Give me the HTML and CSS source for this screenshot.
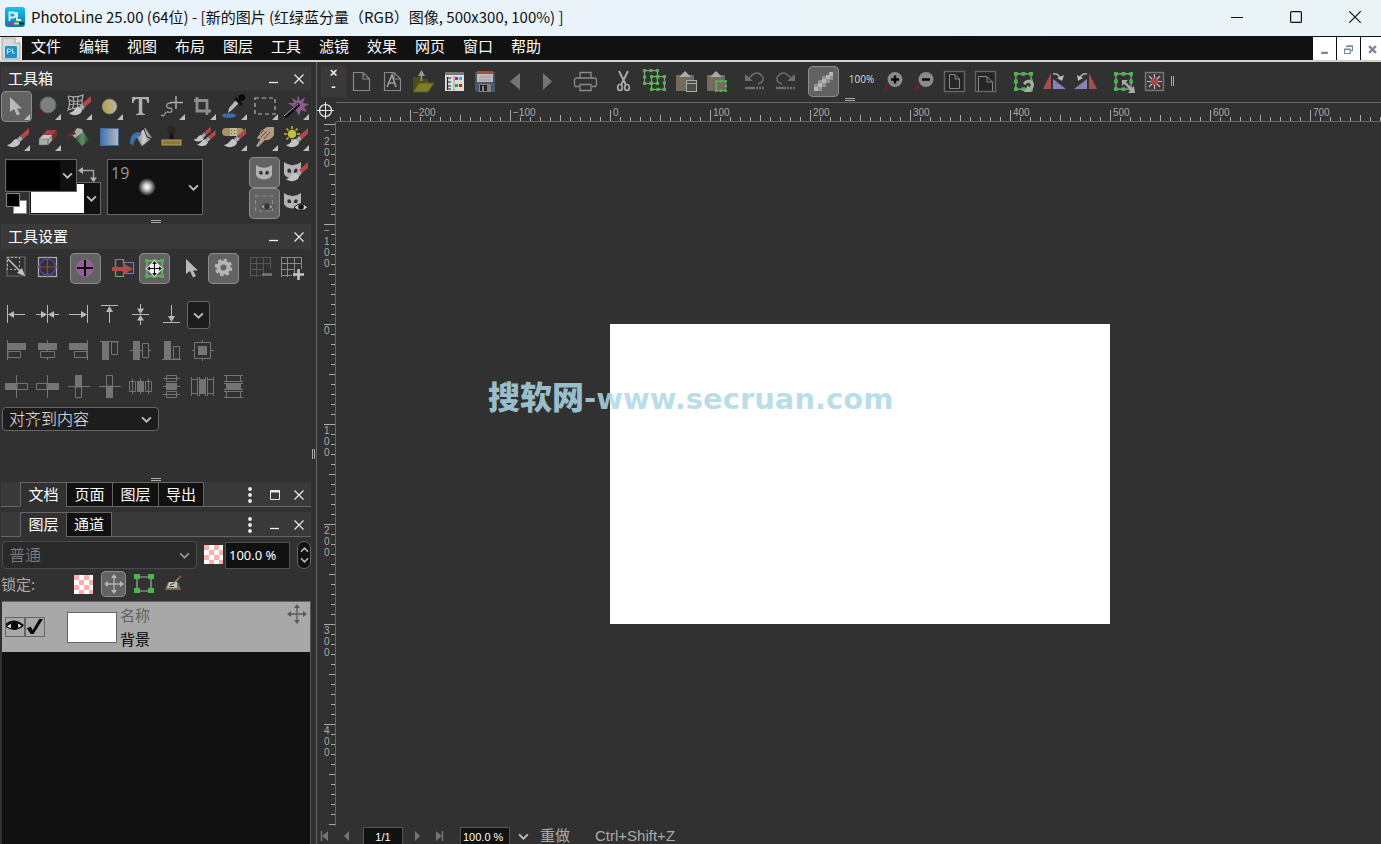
FILE: index.html
```html
<!DOCTYPE html>
<html lang="zh-CN">
<head>
<meta charset="utf-8">
<title>PhotoLine 25.00</title>
<link rel="stylesheet" href="styles.css">
</head>
<body>
<svg class="defs" aria-hidden="true">
  <defs>
    <linearGradient id="gBlue"><stop offset="0" stop-color="#3f6fb5"/><stop offset="1" stop-color="#b9b9b9"/></linearGradient>
    <linearGradient id="gGold"><stop offset="0" stop-color="#b7a049"/><stop offset="1" stop-color="#b9b4a2"/></linearGradient>
    <linearGradient id="gLogo" x2="0" y2="1"><stop offset="0" stop-color="#19c3e6"/><stop offset="1" stop-color="#0a76b5"/></linearGradient>
    <linearGradient id="gGreen"><stop offset="0" stop-color="#23422a"/><stop offset=".6" stop-color="#5f8f63"/><stop offset="1" stop-color="#28442d"/></linearGradient>
    <linearGradient id="gMetal"><stop offset="0" stop-color="#777"/><stop offset=".5" stop-color="#d0d0d0"/><stop offset="1" stop-color="#777"/></linearGradient>
    <radialGradient id="gSoft"><stop offset="0" stop-color="#fff"/><stop offset=".35" stop-color="#ccc"/><stop offset="1" stop-color="#111"/></radialGradient>
    <pattern id="check" width="10" height="10" patternUnits="userSpaceOnUse"><rect width="10" height="10" fill="#fff"/><rect width="5" height="5" fill="#ffadad"/><rect x="5" y="5" width="5" height="5" fill="#ffadad"/></pattern>
  </defs>
  <symbol id="more" viewBox="0 0 31 31"><path d="M23 29L29 23V29Z" fill="#bdbdbd"/></symbol>
  <symbol id="brush" viewBox="0 0 31 31"><path d="M28 6L19 14L22 17L28 12Z" fill="#b04a48"/><path d="M19 14L16 17L19 20L22 17Z" fill="#a9a9a9"/><path d="M16 17C12 16 12 22 6 23C10 27 19 25 19 20Z" fill="#c4c4c4"/></symbol>
  <symbol id="chev" viewBox="0 0 10 6"><path d="M1 1L5 5L9 1" fill="none" stroke="#bdbdbd" stroke-width="1.7"/></symbol>
  <symbol id="close" viewBox="0 0 10 10"><path d="M.5 .5L9.5 9.5M9.5 .5L.5 9.5" stroke="#e8e8e8" stroke-width="1.2"/></symbol>
  <symbol id="mini" viewBox="0 0 10 10"><path d="M0 8.500H9" stroke="#f0f0f0" stroke-width="1.3"/></symbol>
  <symbol id="maxi" viewBox="0 0 10 10"><path d="M.5 .5H9.500V9.500H.5Z" fill="none" stroke="#e8e8e8"/><path d="M0 1.500H10" stroke="#e8e8e8" stroke-width="2"/></symbol>
  <symbol id="dots" viewBox="0 0 4 16"><g fill="#eee"><circle cx="2" cy="2" r="1.900"/><circle cx="2" cy="8" r="1.900"/><circle cx="2" cy="14" r="1.900"/></g></symbol>
  <symbol id="mask" viewBox="0 0 18 16" preserveAspectRatio="none"><path d="M0 0Q4 3 9 3Q14 3 18 0V11Q16 15 9 15.500Q2 15 0 11Z" fill="#b3b3b3"/><path d="M3.500 7Q6 5 7.500 8V10H4ZM14.500 7Q12 5 10.500 8V10H14Z" fill="#333"/></symbol>
  <symbol id="move" viewBox="0 0 20 20"><path d="M10 3V17M3 10H17" stroke="currentColor" stroke-width="1.3"/><path d="M10 0L13 4H7ZM10 20L13 16H7ZM0 10L4 7V13ZM20 10L16 7V13Z" fill="currentColor"/></symbol>
  <symbol id="cursor" viewBox="0 0 12 19"><path d="M0 0V15L4 12L7 18.500L10 17L7 11.500H12Z" fill="#b8b8b8"/></symbol>
  <symbol id="handles" viewBox="0 0 20 20"><path d="M2 2H18V18H2Z" fill="none" stroke="#aaa" stroke-width="1.200"/><path d="M0 0h4v4h-4zM8 0h4v4h-4zM16 0h4v4h-4zM0 8h4v4h-4zM16 8h4v4h-4zM0 16h4v4h-4zM8 16h4v4h-4zM16 16h4v4h-4z" fill="#48b848"/></symbol>
</svg>

<header class="titlebar">
  <svg class="logo" viewBox="0 0 20 20"><rect width="20" height="20" rx="3" fill="url(#gLogo)"/><path d="M4.500 14V5.500H8Q10.500 5.500 10.500 8T8 10.500H5M12 5V13H16" fill="none" stroke="#d6f4fc" stroke-width="1.800"/><path d="M5 16.500H9" stroke="#c428a0" stroke-width="2"/><path d="M9 16.500H14" stroke="#dfe03a" stroke-width="2"/><path d="M14 16.500H19" stroke="#222" stroke-width="2"/></svg>
  <h1>PhotoLine 25.00 (64位) - [新的图片 (红绿蓝分量（RGB）图像, 500x300, 100%) ]</h1>
  <div class="winbtns">
    <button aria-label="最小化"><svg viewBox="0 0 12 12"><path d="M0 6.500H12" stroke="#111"/></svg></button>
    <button aria-label="最大化"><svg viewBox="0 0 12 12"><rect x=".6" y=".6" width="10.800" height="10.800" rx="1" fill="none" stroke="#111" stroke-width="1.200"/></svg></button>
    <button aria-label="关闭"><svg viewBox="0 0 12 12"><path d="M.3 .3L11.700 11.700M11.700 .3L.3 11.700" stroke="#111" stroke-width="1.200"/></svg></button>
  </div>
</header>

<nav class="menubar">
  <svg class="doc" viewBox="0 0 22 23"><rect width="22" height="23" fill="#eee"/><path d="M2 1H15L20 6V22H2Z" fill="#d9d9d9" stroke="#999" stroke-width=".8"/><path d="M15 1V6H20" fill="#fff" stroke="#888" stroke-width=".8"/><rect x="5" y="9" width="12" height="12" rx="1" fill="#1a93c8"/><path d="M7.500 17V12H9Q11 12 11 13.500T8 15M12.500 11.500V16H15" fill="none" stroke="#bfe6f5"/></svg>
  <button>文件</button><button>编辑</button><button>视图</button><button>布局</button><button>图层</button><button>工具</button><button>滤镜</button><button>效果</button><button>网页</button><button>窗口</button><button>帮助</button>
  <div class="mdi">
    <button aria-label="最小化文档"><svg viewBox="0 0 8 8"><path d="M1 7H7" stroke="#778899" stroke-width="2"/></svg></button>
    <button aria-label="还原文档"><svg viewBox="0 0 8 8"><path d="M2.500 2V.7H7.500V5H6M.5 3.500H5.500V7.500H.5ZM.5 4H5.500M2.500 1.200H7.500" fill="none" stroke="#778899"/></svg></button>
    <button aria-label="关闭文档"><svg viewBox="0 0 8 8"><path d="M1 1L7 7M7 1L1 7" stroke="#778899" stroke-width="2"/></svg></button>
  </div>
</nav>

<main class="work">
  <aside class="side">
    <section class="toolbox">
      <div class="head"><h2>工具箱</h2><button aria-label="折叠"><svg><use href="#mini"/></svg></button><button aria-label="关闭"><svg><use href="#close"/></svg></button></div>
      <div class="tools">
        <button class="on" aria-label="选择"><svg viewBox="0 0 31 31"><use href="#cursor" x="9" y="6" width="12" height="19"/><use href="#more"/></svg></button>
        <button aria-label="缩放"><svg viewBox="0 0 31 31"><path d="M11 19L7 23" stroke="#602020" stroke-width="4"/><circle cx="16" cy="14" r="8" fill="#7d8080" stroke="#5e6262"/><use href="#more"/></svg></button>
        <button aria-label="变形"><svg viewBox="0 0 31 31"><path d="M5 5Q13 7 20 4Q18 12 20 18Q12 16 5 19Q8 12 5 5M10 6Q12 12 9 18M15 6Q14 12 15 18M6 9Q13 12 19 9M6 14Q13 12 19 14" fill="none" stroke="#a9a9a9" stroke-width="1.200"/><use href="#brush" y="-1"/><use href="#more"/></svg></button>
        <button aria-label="形状"><svg viewBox="0 0 31 31"><circle cx="15.500" cy="15.500" r="7.500" fill="url(#gGold)" stroke="#777" stroke-width=".7"/><use href="#more"/></svg></button>
        <button aria-label="文字"><svg viewBox="0 0 31 31"><path d="M7 6H24V12H22.500Q22 8 19 8H17.300V21Q17.300 23 20 23V24H11V23Q13.800 23 13.800 21V8H12Q9 8 8.500 12H7Z" fill="#adadad"/></svg></button>
        <button aria-label="曲线"><svg viewBox="0 0 31 31"><path d="M20 5V18M14 11.500H27" stroke="#aaa" stroke-width="1.500"/><path d="M15 12C9 12 10 17 13 17C18 17 16 23 12 21C7 20 10 27 5 24" fill="none" stroke="#999" stroke-width="1.300"/><use href="#more"/></svg></button>
        <button aria-label="裁剪"><svg viewBox="0 0 31 31"><path d="M10 6V20H24M7 9.500H20V24" fill="none" stroke="#8d8d8d" stroke-width="2.800"/><use href="#more"/></svg></button>
        <button aria-label="吸管"><svg viewBox="0 0 31 31"><ellipse cx="11" cy="24.500" rx="7" ry="2.300" fill="#3b6cae"/><path d="M10 22L11 17L18 9L21 12L14 19Z" fill="#bababa"/><path d="M17 7L24 14M20 11L24 7" stroke="#111" stroke-width="3"/><circle cx="24" cy="6.500" r="3.300" fill="#080808"/><use href="#more"/></svg></button>
        <button aria-label="矩形选框"><svg viewBox="0 0 31 31"><rect x="6" y="7" width="20" height="16" fill="none" stroke="#b5b5b5" stroke-width="1.200" stroke-dasharray="4 3"/><use href="#more"/></svg></button>
        <button aria-label="魔棒"><svg viewBox="0 0 31 31"><path d="M18 4L20 10L25 6L23 12L29 13L24 16L27 21L21 19L19 25L16 19L10 21L14 16L8 12L14 12L12 7L17 10Z" fill="#8e5b91"/><path d="M5 26L19 13" stroke="#080808" stroke-width="3.500"/><path d="M4 25L18 13" stroke="#bbb" stroke-width="1"/><use href="#more"/></svg></button>
        <button aria-label="画笔"><svg viewBox="0 0 31 31"><use href="#brush"/><use href="#more"/></svg></button>
        <button aria-label="橡皮"><svg viewBox="0 0 31 31"><path d="M7 17L15 8L25 8L16 18Z" fill="#a43f3d"/><path d="M16 18L25 8V14L16 23Z" fill="#713030"/><path d="M7 17L11 13L20 13L16 18Z" fill="#c5c5c5"/><path d="M7 17H16V23H7ZM16 18L20 13.500V18.500L16 23Z" fill="#aaa" stroke="#666" stroke-width=".5"/><use href="#more"/></svg></button>
        <button aria-label="喷枪"><svg viewBox="0 0 31 31"><path d="M10 14L19 8L26 18L19 24Z" fill="url(#gGreen)"/><path d="M9 13L14 6L19 7L20 10L12 16Z" fill="#aaa"/><path d="M4 13L11 9L13 12L5 15Z" fill="#623032"/></svg></button>
        <button aria-label="渐变"><svg viewBox="0 0 31 31"><rect x="6.500" y="6.500" width="18" height="17" fill="url(#gBlue)" stroke="#4169a6"/></svg></button>
        <button aria-label="填充"><svg viewBox="0 0 31 31"><path d="M11 14L20 6L27 16L17 24Z" fill="url(#gMetal)" stroke="#777" stroke-width=".6"/><path d="M15 13Q15 5 19 7L22 15L27 17" fill="none" stroke="#222"/><path d="M15 10Q5 10 5 21L8 24Q9 16 16 13Z" fill="#3c70ad"/></svg></button>
        <button aria-label="图章"><svg viewBox="0 0 31 31"><rect x="6" y="18" width="19" height="5" fill="#8f7836" stroke="#b49e55"/><path d="M13 17L14 10H17L18 17Z" fill="#151515"/><circle cx="15.500" cy="8" r="4" fill="#282420"/></svg></button>
        <button aria-label="克隆"><svg viewBox="0 0 31 31"><use href="#brush" x="2" y="0" width="24" height="24"/><use href="#brush" x="5" y="3" width="26" height="26"/></svg></button>
        <button aria-label="修复"><svg viewBox="0 0 31 31"><rect x="4" y="6" width="22" height="8" rx="4" fill="#a79365"/><path d="M12 6H19V14H12Z" fill="#c4b894"/><path d="M13 8.500h1m2 0h1m-4 3h1m2 0h1" stroke="#655"/><use href="#brush"/><use href="#more"/></svg></button>
        <button aria-label="涂抹"><svg viewBox="0 0 31 31"><path d="M18 5L25 5V13Q22 19 16 18L9 25L7 24L12 16Q9 18 8 16L12 9Z" fill="#b29a82"/><path d="M12 15L18 9M15 17L21 10M9 14L15 8" stroke="#5f4e40"/><use href="#more"/></svg></button>
        <button aria-label="减淡"><svg viewBox="0 0 31 31"><circle cx="12" cy="12" r="4.300" fill="#c2bf38"/><path d="M12 4V7M12 17V20M4 12H7M17 12H20M6.500 6.500L8.500 8.500M17.500 6.500L15.500 8.500M6.500 17.500L8.500 15.500" stroke="#c2bf38" stroke-width="1.500"/><use href="#brush"/><use href="#more"/></svg></button>
      </div>
      <div class="paint">
        <div class="colors">
          <button class="well back" aria-label="背景色"><i></i><svg class="chev"><use href="#chev"/></svg></button>
          <button class="well fore" aria-label="前景色"><i></i><svg class="chev"><use href="#chev"/></svg></button>
          <svg class="swap" viewBox="0 0 20 18"><path d="M3 5.500H15.500V14" fill="none" stroke="#a5a5a5" stroke-width="1.400"/><path d="M0 5.500L5 2V9ZM12 12.500H19L15.500 17.500Z" fill="#b0b0b0"/></svg>
          <span class="reset white"></span><span class="reset black"></span>
        </div>
        <button class="tip"><span>19</span><svg class="dab" viewBox="0 0 20 20"><circle cx="10" cy="10" r="9" fill="url(#gSoft)"/></svg><svg class="chev"><use href="#chev"/></svg></button>
        <div class="masks">
          <button class="on" aria-label="蒙版"><svg viewBox="0 0 31 31"><use href="#mask" x="7" y="8" width="16" height="15"/></svg></button>
          <button aria-label="绘制蒙版"><svg viewBox="0 0 31 31"><use href="#mask" x="4" y="5" width="17" height="17"/><use href="#brush" y="-1"/></svg></button>
          <button class="on" aria-label="显示选区"><svg viewBox="0 0 31 31"><rect x="6.500" y="8" width="17" height="15" fill="none" stroke="#8d8d8d" stroke-dasharray="4 3" stroke-width="1.200"/><path d="M11 19Q18 12 25 19Q18 24 11 19Z" fill="#999" stroke="#444"/><circle cx="18" cy="18.500" r="2.800" fill="#333"/></svg></button>
          <button aria-label="显示蒙版"><svg viewBox="0 0 31 31"><use href="#mask" x="4" y="5" width="17" height="16"/><path d="M14 19.500Q21 12 28 19.500Q21 26 14 19.500Z" fill="#ccc" stroke="#111"/><circle cx="21" cy="19" r="2.800" fill="#111"/></svg></button>
        </div>
      </div>
      <div class="grip"></div>
    </section>

    <section class="settings">
      <div class="head"><h2>工具设置</h2><button aria-label="折叠"><svg><use href="#mini"/></svg></button><button aria-label="关闭"><svg><use href="#close"/></svg></button></div>
      <div class="opts">
        <div><button aria-label="缩放手柄"><svg viewBox="0 0 31 31"><path d="M6 4H24V23H6Z" fill="none" stroke="#6a6a6a" stroke-width="1.200"/><path d="M6 4.500H18.500V16.500H6.500V4" fill="none" stroke="#b5b5b5" stroke-dasharray="2 2"/><path d="M7 6L20 19" stroke="#c5c5c5" stroke-width="1.500"/><path d="M24 23L16 20L21 15Z" fill="#c5c5c5"/></svg></button>
        <button aria-label="中心"><svg viewBox="0 0 31 31"><rect x="6.500" y="4.500" width="18" height="19" fill="none" stroke="#aaa" stroke-width="1.300"/><circle cx="15.500" cy="14" r="8" fill="none" stroke="#4545b0" stroke-width="1.700"/><path d="M15.500 3V25M5 14H27" stroke="#a64040" stroke-width="1.200"/></svg></button></div>
        <div><button class="on" aria-label="添加点"><svg viewBox="0 0 31 31"><circle cx="15" cy="15" r="9" fill="#94609a"/><path d="M15 7V23M7 15H23" stroke="#080808" stroke-width="2"/></svg></button></div>
        <div><button aria-label="移动内容"><svg viewBox="0 0 31 31"><path d="M7.500 6.500H15.500V23.500H7.500Z" fill="none" stroke="#74a874" stroke-width="1.200"/><path d="M7.500 16V6.500H15.500V12" fill="none" stroke="#a36ba3" stroke-width="1.200"/><path d="M16 9.500H25.500V20.500H16Z" fill="none" stroke="#7676b8" stroke-width="1.200"/><path d="M4 14H15V10L25 16L15 22V18H4Z" fill="#b24a4a"/></svg></button>
        <button class="on" aria-label="变换内容"><svg viewBox="0 0 31 31"><use href="#handles" x="6" y="6" width="19" height="19"/><path d="M15.500 7L24 15.500L15.500 24L7 15.500Z" fill="#eee"/><g color="#080808"><use href="#move" x="8" y="8" width="15" height="15"/></g></svg></button></div>
        <div><button aria-label="直接选择"><svg viewBox="0 0 31 31"><use href="#cursor" x="9" y="6" width="12" height="19"/></svg></button>
        <button class="on" aria-label="设置"><svg viewBox="0 0 31 31"><circle cx="15.500" cy="14.500" r="7.300" fill="none" stroke="#b5b5b5" stroke-width="3" stroke-dasharray="3.300 2.430"/><circle cx="15.500" cy="14.500" r="5" fill="none" stroke="#b5b5b5" stroke-width="4"/></svg></button></div>
        <div><button aria-label="减少网格"><svg viewBox="0 0 31 31"><path d="M5 4.500H25M5 10.500H25M5 16.500H18M5 22.500H15M4.500 4V24M10.500 4V24M17.500 4V24M24.500 4V16" stroke="#555"/><path d="M16 21.500H26" stroke="#777" stroke-width="2.500"/></svg></button>
        <button aria-label="增加网格"><svg viewBox="0 0 31 31"><path d="M5 4.500H25M5 10.500H25M5 16.500H18M5 22.500H15M4.500 4V24M10.500 4V24M17.500 4V24M24.500 4V16" stroke="#888"/><path d="M16 21.500H27M21.500 16V27" stroke="#c5c5c5" stroke-width="2.500"/></svg></button></div>
      </div>
      <div class="icons bright">
        <button aria-label="左"><svg viewBox="0 0 31 31"><path d="M6.500 6V24M10 15.500H24"/><path class="f" d="M7 15.500L13 12V19Z"/></svg></button>
        <button aria-label="水平居中"><svg viewBox="0 0 31 31"><path d="M15.500 6V24M4 15.500H11M20 15.500H27"/><path class="f" d="M15 15.500L9 12V19ZM16 15.500L22 12V19Z"/></svg></button>
        <button aria-label="右"><svg viewBox="0 0 31 31"><path d="M24.500 6V24M6 15.500H21"/><path class="f" d="M24 15.500L18 12V19Z"/></svg></button>
        <button aria-label="上"><svg viewBox="0 0 31 31"><path d="M7 6.500H24M15.500 10V24"/><path class="f" d="M15.500 7L12 13H19Z"/></svg></button>
        <button aria-label="垂直居中"><svg viewBox="0 0 31 31"><path d="M7 15.500H24M15.500 5V11M15.500 20V26"/><path class="f" d="M15.500 15L12 9.500H19ZM15.500 16L12 21.500H19Z"/></svg></button>
        <button aria-label="下"><svg viewBox="0 0 31 31"><path d="M7 23.500H24M15.500 6V20"/><path class="f" d="M15.500 23L12 17H19Z"/></svg></button>
        <button class="drop" aria-label="更多"><svg class="chev"><use href="#chev"/></svg></button>
      </div>
      <div class="icons dim">
        <button aria-label="左对齐"><svg viewBox="0 0 31 31"><path d="M6.500 5V25M7 16.500H19.500V22.500H7Z"/><path class="f" d="M7 8H25V15H7Z"/></svg></button>
        <button aria-label="水平中对齐"><svg viewBox="0 0 31 31"><path d="M15.500 5V8M15.500 14V17M15.500 23V25M8.500 16.500H22.500V22.500H8.500Z"/><path class="f" d="M6 8H25V15H6Z"/></svg></button>
        <button aria-label="右对齐"><svg viewBox="0 0 31 31"><path d="M24.500 5V25M11.500 16.500H24V22.500H11.500Z"/><path class="f" d="M6 8H24V15H6Z"/></svg></button>
        <button aria-label="顶对齐"><svg viewBox="0 0 31 31"><path d="M6 6.500H25M17.500 7H23.500V19.500H17.500Z"/><path class="f" d="M8 7H15V25H8Z"/></svg></button>
        <button aria-label="垂直中对齐"><svg viewBox="0 0 31 31"><path d="M5 15.500H8M14 15.500H17M23 15.500H26M17.500 8.500H23.500V22.500H17.500Z"/><path class="f" d="M8 6H15V25H8Z"/></svg></button>
        <button aria-label="底对齐"><svg viewBox="0 0 31 31"><path d="M6 24.500H25M17.500 11.500H23.500V24H17.500Z"/><path class="f" d="M8 6H15V24H8Z"/></svg></button>
        <button aria-label="居中"><svg viewBox="0 0 31 31"><path d="M7.500 7.500H23.500V23.500H7.500ZM5 15.500H7M24 15.500H27M15.500 5V7M15.500 24V26"/><path class="f" d="M11 11H20V20H11Z"/></svg></button>
      </div>
      <div class="icons dim">
        <button aria-label="左侧分布"><svg viewBox="0 0 31 31"><path d="M15.500 4V27M16 12.500H26.500V18.500H16Z"/><path class="f" d="M4 12H15V19H4Z"/></svg></button>
        <button aria-label="右侧分布"><svg viewBox="0 0 31 31"><path d="M15.500 4V27M4.500 12.500H15V18.500H4.500Z"/><path class="f" d="M16 12H27V19H16Z"/></svg></button>
        <button aria-label="上侧分布"><svg viewBox="0 0 31 31"><path d="M5 15.500H27M12.500 16H18.500V26.500H12.500Z"/><path class="f" d="M12 4H19V15H12Z"/></svg></button>
        <button aria-label="下侧分布"><svg viewBox="0 0 31 31"><path d="M5 15.500H27M12.500 4.500H18.500V15H12.500Z"/><path class="f" d="M12 16H19V27H12Z"/></svg></button>
        <button aria-label="水平分布"><svg viewBox="0 0 31 31"><path d="M4.500 10.500H10.500V20.500H4.500ZM20.500 10.500H26.500V20.500H20.500ZM7.500 7.500V23M15.500 7.500V23M23.500 7.500V23"/><path class="f" d="M12 10H19V21H12Z"/></svg></button>
        <button aria-label="垂直分布"><svg viewBox="0 0 31 31"><path d="M10.500 4.500H20.500V10.500H10.500ZM10.500 20.500H20.500V26.500H10.500ZM7 7.500H24M7 15.500H24M7 23.500H24"/><path class="f" d="M10 12H21V19H10Z"/></svg></button>
        <button aria-label="水平间距"><svg viewBox="0 0 31 31"><path d="M4.500 6V25M10.500 6V25M20.500 6V25M26.500 6V25M4.500 8.500H10.500M4.500 22.500H10.500M20.500 8.500H26.500M20.500 22.500H26.500M12.500 6V25M18.500 6V25"/><path class="f" d="M12 8H19V23H12Z"/></svg></button>
        <button aria-label="垂直间距"><svg viewBox="0 0 31 31"><path d="M6 4.500H25M6 10.500H25M6 20.500H25M6 26.500H25M8.500 4.500V10.500M22.500 4.500V10.500M8.500 20.500V26.500M22.500 20.500V26.500M6 12.500H25M6 18.500H25"/><path class="f" d="M8 12H23V19H8Z"/></svg></button>
      </div>
      <label class="select target"><select aria-label="对齐目标"><option>对齐到内容</option></select><svg class="chev"><use href="#chev"/></svg></label>
      <div class="grip"></div>
    </section>

    <section class="docs">
      <div class="tabs"><button class="cur">文档</button><button>页面</button><button>图层</button><button>导出</button>
        <div class="ctl"><svg class="dots"><use href="#dots"/></svg><button aria-label="展开"><svg><use href="#maxi"/></svg></button><button aria-label="关闭"><svg><use href="#close"/></svg></button></div></div>
    </section>

    <section class="layers">
      <div class="tabs"><button class="cur">图层</button><button>通道</button>
        <div class="ctl"><svg class="dots"><use href="#dots"/></svg><button aria-label="折叠"><svg><use href="#mini"/></svg></button><button aria-label="关闭"><svg><use href="#close"/></svg></button></div></div>
      <div class="blend">
        <label class="select mode"><select disabled aria-label="混合模式"><option>普通</option></select><svg class="chev"><use href="#chev"/></svg></label>
        <svg class="checker" viewBox="0 0 19 19"><rect width="19" height="19" fill="url(#check)"/></svg>
        <input class="opacity" aria-label="不透明度" value="100.0 %">
        <div class="spin"><button aria-label="增加"><svg class="chev up"><use href="#chev"/></svg></button><button aria-label="减少"><svg class="chev"><use href="#chev"/></svg></button></div>
      </div>
      <div class="lock"><span>锁定:</span>
        <button aria-label="锁定透明"><svg class="checker" viewBox="0 0 19 19"><rect width="19" height="19" fill="url(#check)"/></svg></button>
        <button class="on" aria-label="锁定位置"><svg class="i20"><use href="#move"/></svg></button>
        <button aria-label="锁定大小"><svg class="i20" viewBox="0 0 20 20"><path d="M3 3H17V17H3Z" fill="none" stroke="#aaa" stroke-width="1.200"/><path d="M0 0h6v5h-6zM14 0h6v5h-6zM0 14h6v5h-6zM14 14h6v5h-6z" fill="#48b848"/></svg></button>
        <button aria-label="锁定绘制"><svg class="i20" viewBox="0 0 20 20"><path d="M4 8H14L17 16H1Z" fill="#756a58"/><path d="M5 8H13V14H3Z" fill="#c3c3b8"/><path d="M6 10.500L10 9.500M5 12.500H10" stroke="#333"/><path d="M10 9L15 4" stroke="#79a069" stroke-width="1.500"/><path d="M15 4L17 2" stroke="#b04848" stroke-width="2"/></svg></button>
      </div>
      <div class="list">
        <div class="row">
          <div class="flags"><button aria-label="可见"><svg viewBox="0 0 19 19"><path d="M0 9Q9 1 18 8Q10 15 0 9Z" fill="#eee" stroke="#080808" stroke-width="1.300"/><circle cx="9" cy="8.500" r="4" fill="#080808"/><path d="M0 7Q8 0 18 8" fill="none" stroke="#080808" stroke-width="2"/></svg></button><button aria-label="启用"><svg viewBox="0 0 19 19"><path d="M1 11L5 9L7 13L14 1H18L8 17H5Z" fill="#080808"/></svg></button></div>
          <div class="thumb"></div>
          <div class="names"><span>名称</span><b>背景</b></div>
          <svg class="i20"><use href="#move"/></svg>
        </div>
      </div>
    </section>
    <div class="vgrip"></div>
  </aside>

  <section class="stage">
    <div class="toolbar">
      <div class="knob"><span>×</span><span>-</span></div>
      <div><button aria-label="新建"><svg viewBox="0 0 31 31"><path d="M7.500 6.500H17L23.500 13V24.500H7.500ZM17 6.500V13H23.500" fill="none" stroke="#888" stroke-width="1.200"/></svg></button>
      <button aria-label="新建文本"><svg viewBox="0 0 31 31"><path d="M7.500 6.500H17L23.500 13V24.500H7.500ZM17 6.500V13H23.500" fill="none" stroke="#888" stroke-width="1.200"/><path d="M10 21L15 9L19 21M11.500 17H17.500" fill="none" stroke="#999" stroke-width="1.700"/></svg></button>
      <button aria-label="打开"><svg viewBox="0 0 31 31"><path d="M5 11H13L14 13H20V18L12 26H5Z" fill="#4e4c17"/><path d="M11 17H26L20 26H5Z" fill="#7d7c27" stroke="#5b5a1a"/><path d="M13.500 15V8" stroke="#999" stroke-width="1.500"/><path d="M13.500 4L10 10H17Z" fill="#999"/></svg></button>
      <button aria-label="浏览"><svg viewBox="0 0 31 31"><path d="M6 7H25V25H6Z" fill="#ddd"/><path d="M6 6H25V9H6Z" fill="#777"/><path d="M15 10V25" stroke="#999"/><path d="M8.500 11V24M8 12H12M8 16H12M8 20H12M8 23H12" stroke="#222" stroke-width="1.200"/><path d="M16 11h3v3h-3z" fill="#d0c"/><path d="M20 11h3v3h-3z" fill="#0cc"/><path d="M16 18h3v3h-3z" fill="#0b1"/><path d="M20 18h3v3h-3z" fill="#d11"/></svg></button>
      <button aria-label="保存"><svg viewBox="0 0 31 31"><path d="M5 6H25V26H7L5 24Z" fill="#4a5570"/><path d="M7 6H23V16H7Z" fill="#bcbcbc"/><path d="M7 5H23V8H7Z" fill="#a64a48"/><path d="M9 11H21M9 14H21" stroke="#999"/><path d="M9 18H21V26H9Z" fill="#808080"/><path d="M10 19H17V25H10Z" fill="#222"/><path d="M12 20H14V25H12Z" fill="#888"/></svg></button>
      <button aria-label="上一个"><svg viewBox="0 0 31 31"><path d="M19 7V24L9 15.500Z" fill="#747474"/></svg></button>
      <button aria-label="下一个"><svg viewBox="0 0 31 31"><path d="M11 7V24L20 15.500Z" fill="#747474"/></svg></button></div>
      <div><button aria-label="打印"><svg viewBox="0 0 31 31"><path d="M10 12V6.500H21V12M9 20.500H6Q4.500 20.500 4.500 18V14Q4.500 12 7 12H24Q26.500 12 26.500 14V18Q26.500 20.500 25 20.500H22M10 18.500H21V24.500H10Z" fill="none" stroke="#8b8b8b" stroke-width="1.300"/></svg></button></div>
      <div><button aria-label="剪切"><svg viewBox="0 0 31 31"><path d="M11 5L18 19M20 5L13 19" stroke="#aaa" stroke-width="2"/><ellipse cx="12" cy="21.500" rx="2.300" ry="3" fill="none" stroke="#aaa" stroke-width="1.700"/><ellipse cx="19" cy="21.500" rx="2.300" ry="3" fill="none" stroke="#aaa" stroke-width="1.700"/></svg></button>
      <button aria-label="复制"><svg viewBox="0 0 31 31"><use href="#handles" x="4" y="3" width="16" height="16"/><use href="#handles" x="11" y="9" width="16" height="16"/></svg></button>
      <button aria-label="粘贴"><svg viewBox="0 0 31 31"><path d="M6 9H24V25H6Z" fill="#756b5c"/><path d="M9 11L15 5L21 11Z" fill="#aaa"/><rect x="16.500" y="14.500" width="10" height="11" fill="#504c46" stroke="#aaa"/><path d="M17 17.500H26" stroke="#aaa"/></svg></button>
      <button aria-label="粘贴为图层"><svg viewBox="0 0 31 31"><path d="M6 9H24V25H6Z" fill="#756b5c"/><path d="M9 11L15 5L21 11Z" fill="#aaa"/><use href="#handles" x="14" y="14" width="12" height="12"/></svg></button></div>
      <div><button aria-label="撤销"><svg viewBox="0 0 31 31"><path d="M10 12Q19 2 24 12Q25 16 19 18" fill="none" stroke="#6d6d6d" stroke-width="1.500"/><path d="M6 8V15H14Z" fill="#6d6d6d"/><path d="M6 22H16" stroke="#6d6d6d" stroke-width="2.500"/><path d="M17 22H26" stroke="#6d6d6d" stroke-width="2.500" stroke-dasharray="2 1"/></svg></button>
      <button aria-label="重做"><svg viewBox="0 0 31 31"><path d="M21 12Q12 2 7 12Q6 16 12 18" fill="none" stroke="#6d6d6d" stroke-width="1.500"/><path d="M25 8V15H17Z" fill="#6d6d6d"/><path d="M6 22H16" stroke="#6d6d6d" stroke-width="2.500"/><path d="M17 22H26" stroke="#6d6d6d" stroke-width="2.500" stroke-dasharray="2 1"/></svg></button></div>
      <div><button class="on" aria-label="像素"><svg viewBox="0 0 31 31"><path d="M6 21h4v4h-4zM10 17h4v4h-4zM14 13h4v4h-4zM18 9h4v4h-4zM21 6h4v4h-4z" fill="#b5b5b5"/><path d="M10 21h4v4h-4zM14 17h4v4h-4zM18 13h4v4h-4zM22 10h3v4h-3zM6 18h4v3h-4zM10 14h4v3h-4zM14 10h4v3h-4z" fill="#929292"/></svg></button></div>
      <div><button class="pct">100%</button>
      <button aria-label="放大"><svg viewBox="0 0 31 31"><path d="M11 19L7 24" stroke="#632323" stroke-width="4"/><circle cx="18" cy="13.500" r="7.500" fill="#8a8a8a"/><path d="M18 9.500V17.500M14 13.500H22" stroke="#080808" stroke-width="2.500"/></svg></button>
      <button aria-label="缩小"><svg viewBox="0 0 31 31"><path d="M11 19L7 24" stroke="#632323" stroke-width="4"/><circle cx="18" cy="13.500" r="7.500" fill="#8a8a8a"/><path d="M14 13.500H22" stroke="#080808" stroke-width="2.500"/></svg></button>
      <button aria-label="整页"><svg viewBox="0 0 31 31"><rect x="5.500" y="5.500" width="20" height="20" fill="#262626" stroke="#666" stroke-width="1.400"/><path d="M10.500 8.500H16L20.500 13V22.500H10.500ZM16 8.500V13H20.500" fill="none" stroke="#888"/></svg></button>
      <button aria-label="页宽"><svg viewBox="0 0 31 31"><rect x="5.500" y="5.500" width="20" height="20" fill="#262626" stroke="#666" stroke-width="1.400"/><path d="M8.500 25V10.500H17L22.500 16V25M17 10.500V16H22.500" fill="none" stroke="#888"/></svg></button></div>
      <div><button aria-label="旋转"><svg viewBox="0 0 31 31"><use href="#handles" x="6" y="6" width="19" height="19"/><path d="M16 18Q20 13 24 17Q26 21 21 23" fill="none" stroke="#aaa" stroke-width="3"/><path d="M24 26L16 26L20 19Z" fill="#aaa"/></svg></button>
      <button aria-label="向右旋转"><svg viewBox="0 0 31 31"><path d="M12 7V23H4Z" fill="#a64c4c"/><path d="M14 13V23H27Z" fill="#8383b8"/><path d="M14 8Q19 7 21 12" fill="none" stroke="#aaa" stroke-width="1.500"/><path d="M25 9L23 15L18 12Z" fill="#bbb"/></svg></button>
      <button aria-label="向左旋转"><svg viewBox="0 0 31 31"><path d="M19 7V23H27Z" fill="#a64c4c"/><path d="M17 13V23H4Z" fill="#8383b8"/><path d="M17 8Q12 7 10 12" fill="none" stroke="#aaa" stroke-width="1.500"/><path d="M7 9L8 15L13 12Z" fill="#bbb"/></svg></button></div>
      <div><button aria-label="缩放图层"><svg viewBox="0 0 31 31"><use href="#handles" x="6" y="6" width="19" height="19"/><path d="M16 16L25 25" stroke="#aaa" stroke-width="2.500"/><path d="M14 14H20L14 20ZM27 27H20L26 20Z" fill="#aaa"/></svg></button>
      <button aria-label="锐化"><svg viewBox="0 0 31 31"><rect x="6.500" y="6.500" width="18" height="18" fill="#3c3c3c" stroke="#777" stroke-width="1.400"/><circle cx="15.500" cy="15.500" r="4" fill="#ad4545"/><path d="M15.500 8V12M15.500 19V23M8 15.500H12M19 15.500H23M10 10L13 13M21 10L18 13M10 21L13 18M21 21L18 18" stroke="#bbb" stroke-width="1.200"/></svg></button></div>
      <i class="vbar"></i>
      <i class="hgrip"></i>
    </div>
    <div class="view">
      <div class="corner"><svg viewBox="0 0 17 17"><circle cx="8.500" cy="8.500" r="6" fill="none" stroke="#eee" stroke-width="1.200"/><path d="M8.500 0V17M0 8.500H17" stroke="#eee"/></svg></div>
      <div class="hruler"><span>−200</span><span>−100</span><span>0</span><span>100</span><span>200</span><span>300</span><span>400</span><span>500</span><span>600</span><span>700</span></div>
      <div class="vruler"><span>−200</span><span>−100</span><span>0</span><span>100</span><span>200</span><span>300</span><span>400</span></div>
      <div class="canvas"><div class="image"></div><p class="mark">搜软网-<span>www.secruan.com</span></p></div>
    </div>
    <footer class="status">
      <button aria-label="首页"><svg viewBox="0 0 10 12"><path d="M1.500 1V11" stroke="#747474" stroke-width="1.500"/><path d="M8 1V11L2 6Z" fill="#747474"/></svg></button>
      <button aria-label="上一页"><svg viewBox="0 0 10 12"><path d="M7 1V11L2 6Z" fill="#747474"/></svg></button>
      <input class="page" aria-label="页码" value="1/1">
      <button aria-label="下一页"><svg viewBox="0 0 10 12"><path d="M3 1V11L8 6Z" fill="#747474"/></svg></button>
      <button aria-label="末页"><svg viewBox="0 0 10 12"><path d="M8.500 1V11" stroke="#747474" stroke-width="1.500"/><path d="M2 1V11L8 6Z" fill="#747474"/></svg></button>
      <input class="zoom" aria-label="缩放比例" value="100.0 %">
      <button aria-label="缩放列表"><svg class="chev"><use href="#chev"/></svg></button>
      <span class="redo">重做</span><span>Ctrl+Shift+Z</span>
    </footer>
  </section>
</main>
</body>
</html>
```

FILE: styles.css
```css
* { box-sizing: border-box; }
body { margin: 0; height: 100vh; display: flex; flex-direction: column; overflow: hidden; background: #313131; color: #eee; font: 15px/20px "Open Sans", "Noto Sans CJK SC", sans-serif; }
button { margin: 0; padding: 0; border: 0; background: none; color: inherit; font: inherit; display: flex; align-items: center; justify-content: center; flex: none; }
svg { display: block; flex: none; }
h1, h2, p { margin: 0; font-weight: 400; }
.defs { position: absolute; width: 0; height: 0; }
.chev { width: 11px; height: 7px; }

.titlebar { flex: none; height: 36px; display: flex; align-items: center; padding: 0 0 2px 5px; background: linear-gradient(90deg, #e9f3fc, #eaf3f6); color: #111; }
.titlebar h1 { margin-left: 6px; flex: 1; font: 15px/20px "Noto Sans CJK SC", sans-serif; white-space: nowrap; }
.logo { width: 20px; height: 20px; }
.winbtns { display: flex; padding-right: 20px; }
.winbtns button { width: 12px; height: 12px; margin-left: 47px; }
.winbtns svg { width: 12px; height: 12px; }

.menubar { flex: none; height: 26px; display: flex; background: #111; border-bottom: 2px solid #cfd2d0; overflow: hidden; }
.menubar > button { width: 48px; height: 20px; color: #fff; font-family: "Noto Sans CJK SC", sans-serif; }
.doc { width: 22px; height: 23px; margin-top: 1px; }
.mdi { margin: 0 -3px 0 auto; display: flex; gap: 1px; padding-top: 1px; }
.mdi button { width: 23px; background: #fff; }
.mdi svg { width: 9px; height: 9px; margin-top: 2px; }

.work { flex: 1; min-height: 0; display: flex; }
.side { position: relative; flex: none; width: 317px; display: flex; flex-direction: column; padding: 4px 5px 0 1px; border-right: 1px solid #666; }
.head { height: 25px; display: flex; align-items: center; background: #393939; padding: 0 7px; gap: 15px; }
.head h2 { flex: 1; margin-bottom: 2px; font: 15px/20px "Noto Sans CJK SC", sans-serif; color: #fff; }
.head svg, .ctl button svg { width: 10px; height: 10px; }
.tools { display: grid; grid-template-columns: repeat(10, 31px); }
.tools button, .tools svg, .masks button, .masks svg, .opts button, .opts svg, .icons button, .icons > button > svg, .toolbar button, .toolbar svg { width: 31px; height: 31px; }
button.on { background: #626262; border-radius: 5px; box-shadow: inset 0 0 0 1px #8c8c8c; }

.paint { display: flex; padding: 4px 0 0 4px; }
.colors { position: relative; width: 98px; height: 56px; margin: 2px 4px 0 0; }
.well { position: absolute; width: 72px; height: 33px; border: 1px solid #666; background: #111; justify-content: space-between; padding: 1px 3px 1px 1px; }
.well i { width: 53px; height: 29px; background: #000; }
.back { left: 24px; top: 23px; }
.back i { background: #fff; }
.fore { left: 0; top: 0; }
.swap { position: absolute; left: 73px; top: 6px; width: 20px; height: 18px; }
.reset { position: absolute; width: 14px; height: 14px; border: 1px solid #888; }
.white { left: 8px; top: 41px; background: #fff; }
.black { left: 1px; top: 34px; background: #000; }
.tip { width: 96px; height: 56px; margin-top: 2px; border: 1px solid #666; background: #111; justify-content: flex-start; padding: 0 3px; color: #999; font-size: 16px; }
.tip span { align-self: flex-start; margin-top: 3px; }
.dab { width: 20px; height: 20px; margin-left: 8px; }
.tip .chev { margin-left: auto; }
.masks { display: grid; grid-template-columns: 31px 31px; margin-left: auto; }
.grip { height: 5px; margin-left: 150px; width: 10px; background: linear-gradient(#aaa 1px, transparent 1px 2px, #aaa 2px 3px, transparent 3px) 0 1px no-repeat; }

.opts { display: flex; gap: 7px; padding-top: 4px; }
.opts div { display: flex; }
.icons { display: flex; margin-top: 5px; }
.opts + .icons { margin-top: 15px; }
.bright { --ink: #b8b8b8; }
.dim { --ink: #747474; }
.icons path { fill: none; stroke: var(--ink); stroke-width: 1; }
.icons .f { fill: var(--ink); stroke: none; }
.icons .drop { width: 23px; height: 28px; margin-top: 2px; border: 1px solid #666; border-radius: 3px; background: #1d1d1d; }
.icons .drop .chev { width: 11px; height: 7px; }
.select { position: relative; display: block; }
.select select { appearance: none; width: 100%; height: 100%; padding: 0 6px 2px; border: 1px solid #666; border-radius: 4px; background: #1d1d1d; color: #eee; font: 300 16px/20px "Noto Sans CJK SC", sans-serif; opacity: 1; }
.select .chev { position: absolute; right: 7px; top: calc(50% - 3px); }
.target { width: 157px; height: 24px; margin: 5px 0 46px 1px; }

.tabs { height: 25px; display: flex; background: #393939; padding-left: 19px; font-family: "Noto Sans CJK SC", sans-serif; box-shadow: inset 0 -1px #666; }
.tabs > button { width: 46px; padding-bottom: 2px; border: solid #666; border-width: 1px 0 1px 1px; background: #111; color: #fff; }
.tabs > button:nth-last-child(2) { border-right-width: 1px; }
.tabs > .cur { background: #313131; border-bottom-color: #313131; }
.ctl { margin-left: auto; display: flex; align-items: center; gap: 14px; padding-right: 7px; }
.dots { width: 4px; height: 16px; margin-right: 4px; }
.layers { flex: 1; display: flex; flex-direction: column; margin-top: 5px; }
.blend { display: flex; align-items: center; height: 28px; margin: 4px 0 0 1px; }
.mode { width: 195px; height: 28px; }
.mode select { border-color: #4c4c4c; background: #292929; color: #8b8b8b; }
.mode .chev { opacity: .7; }
.checker { width: 19px; height: 19px; }
.blend .checker { margin: 0 2px 2px 7px; }
.opacity { width: 65px; height: 27px; border: 1px solid #505050; background: #111; color: #fff; padding: 0 3px; font: 13px/20px "Noto Sans", sans-serif; }
.spin { margin-left: auto; width: 14px; height: 28px; border: 1px solid #666; border-radius: 7px; background: #111; display: flex; flex-direction: column; align-items: center; justify-content: space-evenly; }
.spin .chev { width: 9px; height: 6px; }
.up { transform: rotate(180deg); }
.lock { display: flex; align-items: center; gap: 5px; height: 30px; color: #aaa; font-family: "Noto Sans CJK SC", sans-serif; }
.lock span { width: 65px; }
.lock button { width: 25px; height: 26px; }
.lock .checker { margin: 0; }
.i20 { width: 20px; height: 20px; color: #b5b5b5; }
.list { flex: 1; margin: 2px 0 0 1px; background: #111; border-right: 1px solid #555; }
.row { height: 51px; display: flex; align-items: center; padding: 0 3px; background: #a8a8a8; border-top: 1px solid #666; }
.flags { display: flex; }
.flags button { width: 20px; height: 20px; border: 1px solid #666; }
.flags svg { width: 18px; height: 18px; }
.thumb { width: 50px; height: 31px; margin: 0 3px 0 22px; background: #fff; border: 1px solid #666; }
.row .names { flex: 1; display: flex; flex-direction: column; gap: 4px; color: #606060; font-family: "Noto Sans CJK SC", sans-serif; }
.names b { font-weight: 400; color: #000; }
.row .i20 { align-self: flex-start; margin-top: 2px; color: #5a5a5a; }
.vgrip { position: absolute; right: 1px; top: calc(50% - 4px); width: 3px; height: 10px; border: solid #aaa; border-width: 0 1px; }

.stage { flex: 1; min-width: 0; display: flex; flex-direction: column; }
.toolbar { position: relative; flex: none; display: flex; gap: 7px; height: 40px; padding: 4px 0 0 4px; }
.toolbar > div { display: flex; }
.toolbar .knob { width: 25px; height: 31px; margin-right: -7px; flex-direction: column; align-items: center; background: #393939; font: bold 13px/14px "Liberation Sans", sans-serif; }
.toolbar .pct { color: #ddd; font: 10px/16px "Open Sans", sans-serif; padding-bottom: 5px; }
.vbar { width: 3px; height: 10px; margin: 10px 0 0 -6px; border: solid #aaa; border-width: 0 1px; }
.hgrip { position: absolute; left: 528px; bottom: 1px; width: 10px; height: 3px; border: solid #aaa; border-width: 1px 0; }
.view { flex: 1; min-height: 0; display: grid; grid-template-columns: 19px 1fr; grid-template-rows: 20px 1fr; }
.corner { display: flex; align-items: flex-start; }
.corner svg { width: 17px; height: 17px; }
.hruler, .vruler { overflow: hidden; display: flex; color: #aaa; font: 10px/11px "Liberation Sans", sans-serif; }
.hruler { border: solid #666; border-width: 1px 0; padding-left: 74px; background: repeating-linear-gradient(90deg, #aaa 0 1px, transparent 1px 10px) 4px 100% / 100% 4px no-repeat, repeating-linear-gradient(90deg, #aaa 0 1px, transparent 1px 50px) 24px 100% / 100% 6px no-repeat; }
.hruler span { flex: none; width: 100px; height: 11px; margin-top: 7px; padding-left: 2px; line-height: 5px; border-left: 1px solid #aaa; }
.vruler { flex-direction: column; padding-top: 2px; border-right: 1px solid #666; background: repeating-linear-gradient(#aaa 0 1px, transparent 1px 10px) 100% 2px / 4px 100% no-repeat, repeating-linear-gradient(#aaa 0 1px, transparent 1px 50px) 100% 2px / 6px 100% no-repeat; }
.vruler span { flex: none; width: 11px; height: 100px; margin-left: 7px; padding: 0 5px 0 0; border-top: 1px solid #aaa; word-break: break-all; line-break: anywhere; }
.canvas { position: relative; overflow: hidden; }
.image { position: absolute; left: 274px; top: 202px; width: 500px; height: 300px; background: #fff; }
.mark { position: absolute; left: 152px; top: 253px; white-space: nowrap; color: rgba(173, 216, 230, .86); font: 900 32px/40px "Noto Sans CJK SC", sans-serif; }
.mark span { font: bold 29px/40px "DejaVu Sans", sans-serif; }
.status { flex: none; height: 18px; overflow: hidden; display: flex; align-items: center; padding: 2px 0 0 2px; color: #aaa; font: 15px/18px "Liberation Sans", "Noto Sans CJK SC", sans-serif; }
.status button { width: 12px; margin-right: 10px; }
.status button svg:not(.chev) { width: 10px; height: 12px; }
.status input { height: 18px; border: 1px solid #555; border-bottom: 0; background: #111; color: #fff; font: 11px/16px "Liberation Sans", sans-serif; }
.page { width: 40px; margin-right: 8px; text-align: center; }
.zoom { width: 50px; margin: 0 7px 0 5px; padding: 0 2px; }
.redo { margin: 0 25px 0 1px; }
```
